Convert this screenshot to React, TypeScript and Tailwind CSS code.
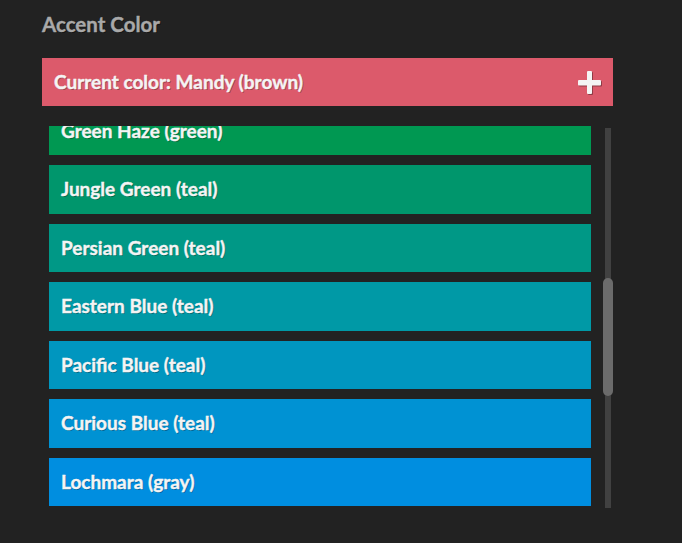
import React from "react";

const items = [
  { name: "Green Haze (green)", color: "#009852" },
  { name: "Jungle Green (teal)", color: "#00966c" },
  { name: "Persian Green (teal)", color: "#009886" },
  { name: "Eastern Blue (teal)", color: "#0099a6" },
  { name: "Pacific Blue (teal)", color: "#0096bf" },
  { name: "Curious Blue (teal)", color: "#0092d3" },
  { name: "Lochmara (gray)", color: "#008ee0" },
];

const font = { fontFamily: "Lato, 'Noto Sans', sans-serif" };

export default function App() {
  return (
    <div className="w-full h-[543px] bg-[#222222] overflow-hidden pl-[42px] pt-[11px]" style={font}>
      <div className="text-[20.5px] leading-[26px] font-bold text-[#a9a9a9] [text-shadow:1px_1px_0_rgba(0,0,0,0.4)] [-webkit-text-stroke:0.4px_#a9a9a9]">
        Accent Color
      </div>
      <div className="mt-[21px] w-[571px] h-[48px] bg-[#dc5a6b] flex items-center justify-between pl-[12px] pr-[12px]">
        <span className="text-[19px] font-bold text-[#f4f4f4] [text-shadow:1px_1px_0_rgba(0,0,0,0.3)] [-webkit-text-stroke:0.4px_#f4f4f4]">
          Current color: Mandy (brown)
        </span>
        <svg width="23" height="23" viewBox="0 0 23 23" className="[filter:drop-shadow(1px_1px_0_rgba(0,0,0,0.35))]">
          <rect x="9" y="0" width="5" height="23" rx="1" fill="#f4f4f4" />
          <rect x="0" y="9" width="23" height="5.5" rx="1" fill="#f4f4f4" />
        </svg>
      </div>
      <div className="mt-[20px] flex flex-row">
        <div className="ml-[7px] w-[542px] h-[381px] overflow-hidden">
          <div className="flex flex-col gap-[9.85px] mt-[-19.5px]">
            {items.map((it) => (
              <div
                key={it.name}
                className="h-[48.7px] shrink-0 flex items-center pl-[12px] text-[19px] font-bold text-[#f4f4f4] [text-shadow:1px_1px_0_rgba(0,0,0,0.3)] [-webkit-text-stroke:0.4px_#f4f4f4]"
                style={{ backgroundColor: it.color }}
              >
                {it.name}
              </div>
            ))}
          </div>
        </div>
        <div className="ml-[12px] w-[10px] h-[382px] pt-[2px] flex justify-center">
          <div className="w-[6px] h-[380px] bg-[#414141] flex flex-col items-center">
            <div className="mt-[150px] w-[10px] h-[118px] rounded-full bg-[#6b6b6b] shrink-0" />
          </div>
        </div>
      </div>
    </div>
  );
}
